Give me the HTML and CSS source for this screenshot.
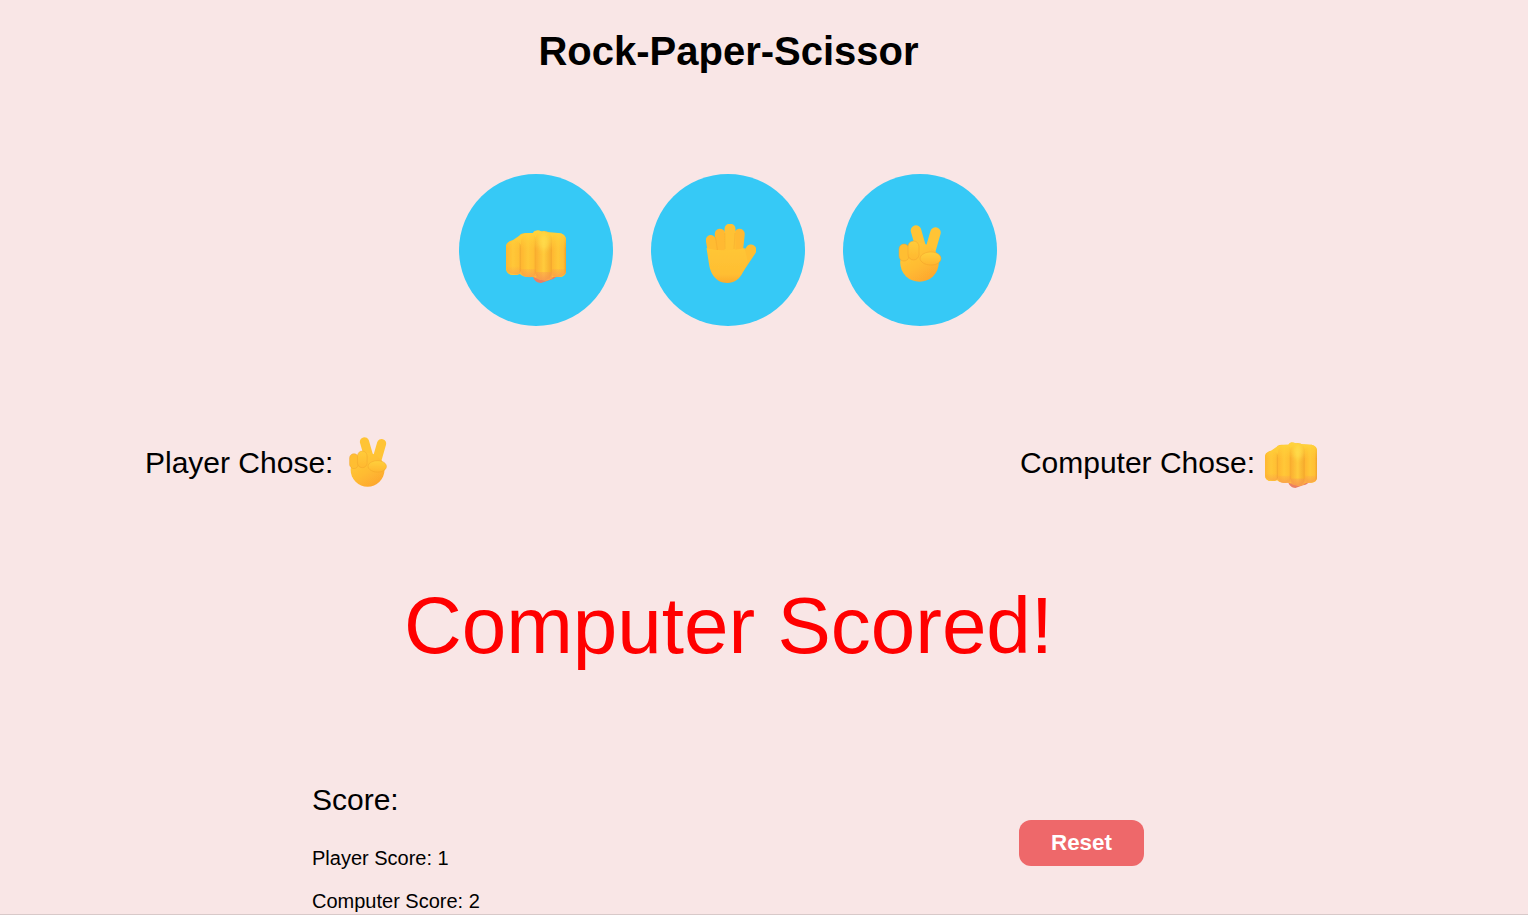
FILE: index.html
```html
<!DOCTYPE html>
<html lang="en">
<head>
<meta charset="utf-8">
<title>Rock-Paper-Scissor</title>
<link rel="stylesheet" href="styles.css">
</head>
<body>
<svg class="defs" aria-hidden="true">
  <defs>
    <filter id="soft" x="-10%" y="-10%" width="120%" height="120%"><feGaussianBlur stdDeviation=".4"/></filter>
    <filter id="softer" x="-60%" y="-60%" width="220%" height="220%"><feGaussianBlur stdDeviation="2.500"/></filter>
    <linearGradient id="knuckle" x1="0" y1="0" x2="1" y2="0">
      <stop offset="0" stop-color="#ffb630"/><stop offset=".45" stop-color="#ffc838"/><stop offset=".82" stop-color="#ffbf33"/><stop offset="1" stop-color="#f0a22a"/>
    </linearGradient>
    <linearGradient id="knuckleMid" x1="0" y1="0" x2="1" y2="0">
      <stop offset="0" stop-color="#fbae30"/><stop offset=".5" stop-color="#ffcb3c"/><stop offset="1" stop-color="#f5a82c"/>
    </linearGradient>
    <linearGradient id="topGlow" x1="0" y1="0" x2="0" y2="1">
      <stop offset="0" stop-color="#ffd43c"/><stop offset="1" stop-color="#ffcf38" stop-opacity="0"/>
    </linearGradient>
    <linearGradient id="bottomGlow" x1="0" y1="0" x2="0" y2="1">
      <stop offset="0" stop-color="#f98a58" stop-opacity="0"/><stop offset="1" stop-color="#f58a58"/>
    </linearGradient>
    <linearGradient id="palm" x1=".2" y1="0" x2=".8" y2="1">
      <stop offset="0" stop-color="#ffcb3a"/><stop offset=".55" stop-color="#ffbb31"/><stop offset="1" stop-color="#fda42e"/>
    </linearGradient>
    <linearGradient id="palmHand" x1="0" y1="0" x2="0" y2="1">
      <stop offset="0" stop-color="#ffc636"/><stop offset=".75" stop-color="#ffbe32"/><stop offset="1" stop-color="#fcab2c"/>
    </linearGradient>
    <linearGradient id="thumb" x1="0" y1="0" x2="0" y2="1">
      <stop offset="0" stop-color="#ffd03c"/><stop offset="1" stop-color="#ffb630"/>
    </linearGradient>
    <linearGradient id="raised" x1="0" y1="0" x2="0" y2="1">
      <stop offset="0" stop-color="#ffcc3a"/><stop offset="1" stop-color="#ffb830"/>
    </linearGradient>
    <symbol id="fist" viewBox="0 0 60 53">
      <g filter="url(#soft)">
        <path d="M27 42h25c0 4-3 7-8 8l-9 3c-4 0-7-3-8-6z" fill="#ec7f62"/>
        <path d="M0 17c0-4 3-6 7-7l6-4c2-3 5-3 9-3h5c2-3 5-3 9-1l16 1c5 0 8 3 8 7v31c0 4-3 6-7 6h-6c-2 3-7 4-11 3-4 0-6-3-9-3h-5c-4 0-7-2-8-3-2 1-4 1-7 1-4 0-7-3-7-7z" fill="#ffc535"/>
        <rect x="0" y="11" width="15.500" height="34" rx="6.500" fill="url(#knuckle)"/>
        <rect x="15" y="4" width="15.500" height="43" rx="7" fill="url(#knuckle)"/>
        <rect x="45.500" y="4" width="14.500" height="43" rx="6.500" fill="url(#knuckle)"/>
        <rect x="29.500" y="1" width="16.500" height="49" rx="8" fill="url(#knuckleMid)"/>
        <path d="M3 13c4-2 8-6 12-8 4-2 9-2 12-2 2-3 6-3 9-1l16 1c5 0 8 3 8 7v9H1c0-3 0-5 2-6z" fill="url(#topGlow)"/>
        <ellipse cx="38" cy="12" rx="5" ry="8" fill="#ffe050" filter="url(#softer)" opacity=".7"/>
        <path d="M1 36h14v7c-3 2-11 2-14-3zM15 39h15v7c-5 2-11 2-15-2zM30 42h16v6c-5 3-12 3-16 0zM46 39h14v3c-2 5-10 6-14 4z" fill="url(#bottomGlow)" opacity=".7"/>
      </g>
    </symbol>
    <symbol id="hand" viewBox="0 0 50 59">
      <g filter="url(#soft)">
        <g fill="none" stroke-linecap="round">
          <path d="M4.800 16L8 34" stroke="#ffbc32" stroke-width="10"/>
          <path d="M45 26L33 44" stroke="#ffbe33" stroke-width="11"/>
          <path d="M14 10L16 34" stroke="#ffb931" stroke-width="10.500"/>
          <path d="M33.500 10L31 34" stroke="#ffb931" stroke-width="10.500"/>
          <path d="M24 5V34" stroke="#ffc235" stroke-width="11"/>
        </g>
        <path d="M0.500 24C8 27 28 27 38.500 24l3 13c-3 7-6 22-20 22C9 59 4 48 3 40z" fill="url(#palmHand)"/>
        <g fill="none" stroke="#f0a02a" stroke-width=".8" opacity=".45">
          <path d="M9.500 13L11.500 26"/>
          <path d="M18.800 9L19 25"/>
          <path d="M29 9L28 25"/>
        </g>
      </g>
    </symbol>
    <symbol id="peace" viewBox="0 0 42 57">
      <g filter="url(#soft)">
        <g fill="none" stroke-linecap="round" stroke="#ffc436" stroke-width="10.500">
          <path d="M17 5.500L24 30"/>
          <path d="M36.500 7.500L30 30"/>
        </g>
        <circle cx="20.500" cy="37.500" r="19.300" fill="url(#palm)"/>
        <rect x="0" y="19" width="10" height="17" rx="5" fill="#ffbe33" stroke="#f0a02a" stroke-width=".5"/>
        <rect x="9" y="16" width="11" height="19" rx="5.500" fill="url(#raised)" stroke="#f0a02a" stroke-width=".5"/>
        <path d="M21 33c1-4 6-6 11-6 6 0 10 3 10 6.500S38 40 32 40c-6 0-11-3-11-7z" fill="url(#thumb)" stroke="#f0a02a" stroke-width=".5"/>
      </g>
    </symbol>
  </defs>
</svg>
<main class="page">
  <h1 class="title">Rock-Paper-Scissor</h1>
  <section class="choices">
    <button class="choice" type="button" aria-label="Rock"><svg class="icon-fist"><use href="#fist"/></svg></button>
    <button class="choice" type="button" aria-label="Paper"><svg class="icon-hand"><use href="#hand"/></svg></button>
    <button class="choice" type="button" aria-label="Scissors"><svg class="icon-peace"><use href="#peace"/></svg></button>
  </section>
  <section class="chosen">
    <div class="chosen-item">Player Chose:<svg class="small-peace"><use href="#peace"/></svg></div>
    <div class="chosen-item computer">Computer Chose:<svg class="small-fist"><use href="#fist"/></svg></div>
  </section>
  <p class="result">Computer Scored!</p>
  <section class="bottom">
    <div class="score">
      <h2 class="score-title">Score:</h2>
      <p class="score-line">Player Score: 1</p>
      <p class="score-line">Computer Score: 2</p>
    </div>
    <button class="reset" type="button">Reset</button>
  </section>
</main>
</body>
</html>
```

FILE: styles.css
```css
* {
  box-sizing: border-box;
}

html,
body {
  margin: 0;
  padding: 0;
}

body {
  height: 915px;
  overflow: hidden;
  background: #f9e6e6;
  border-bottom: 1px solid #d8c9c9;
  color: #000;
  font-family: "Liberation Sans", Arial, sans-serif;
}

.defs {
  display: block;
  width: 0;
  height: 0;
}

.page {
  width: 1457px;
}

.title {
  margin: 0;
  padding-top: 28px;
  font-size: 40px;
  line-height: 46px;
  font-weight: 700;
  text-align: center;
}

.choices {
  display: flex;
  justify-content: center;
  gap: 38px;
  margin-top: 100px;
  padding-right: 2px;
}

.choice {
  display: flex;
  align-items: center;
  justify-content: center;
  width: 154px;
  height: 152px;
  padding: 0;
  border: 0;
  border-radius: 50%;
  background: #36c9f6;
}

.icon-fist {
  width: 60px;
  height: 53px;
  margin-top: 13px;
}

.icon-hand {
  width: 50px;
  height: 59px;
  margin: 7px 0 0 7px;
}

.icon-peace {
  width: 44px;
  height: 57px;
  margin-top: 6px;
}

.chosen {
  display: flex;
  justify-content: space-between;
  align-items: center;
  height: 60px;
  margin-top: 107px;
  padding: 0 140px 0 145px;
  font-size: 30px;
}

.chosen-item {
  display: flex;
  align-items: center;
}

.small-peace {
  width: 38px;
  height: 50px;
  margin-left: 16px;
  margin-bottom: 2px;
}

.small-fist {
  width: 52px;
  height: 46px;
  margin-left: 10px;
  margin-top: 3px;
}

.result {
  margin: 87px 0 0;
  font-size: 80px;
  line-height: 92px;
  color: #f00;
  text-align: center;
}

.bottom {
  display: flex;
  align-items: flex-start;
  margin-top: 111px;
  padding-left: 312px;
}

.score {
  width: 707px;
}

.score-title {
  margin: 0;
  font-size: 30px;
  line-height: 34px;
  font-weight: 400;
}

.score-line {
  margin: 0;
  padding-top: 25px;
  font-size: 20px;
  line-height: 18px;
}

.score-title + .score-line {
  padding-top: 32px;
}

.reset {
  width: 125px;
  height: 46px;
  margin-top: 37px;
  padding: 0;
  border: 0;
  border-radius: 12px;
  background: #ee686a;
  color: #fff;
  font-family: inherit;
  font-size: 22.4px;
  font-weight: 700;
}
```
